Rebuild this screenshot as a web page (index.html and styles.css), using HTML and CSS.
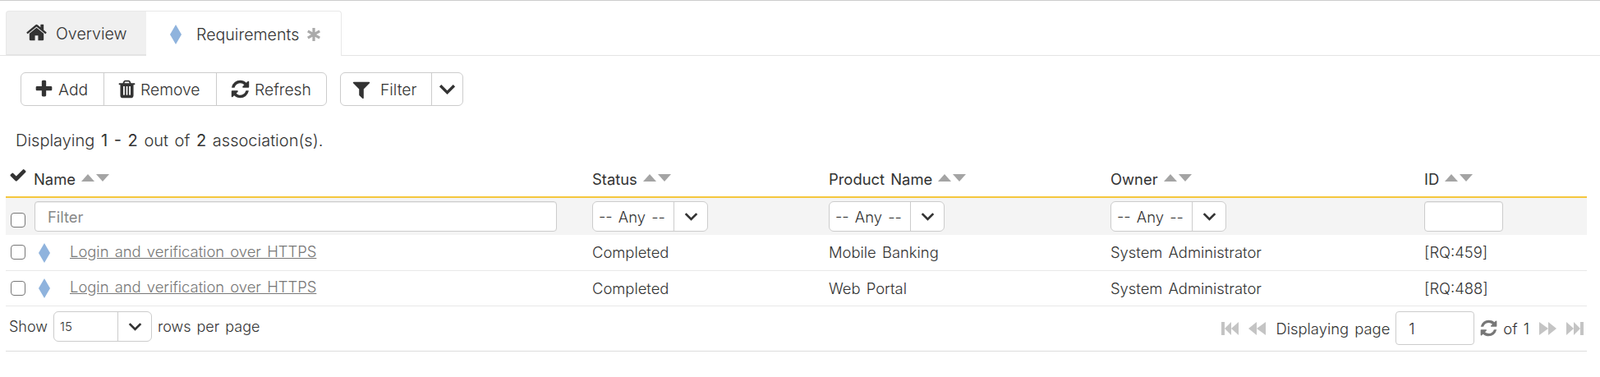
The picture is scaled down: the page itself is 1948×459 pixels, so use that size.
FILE: index.html
```html
<!DOCTYPE html>
<html lang="en">
<head>
    <meta charset="UTF-8">
    <meta name="viewport" content="width=device-width, initial-scale=1.0">
    <title>Requirements</title>
    <link rel="stylesheet" href="styles.css">
</head>
<body>
    <svg class="sprite" xmlns="http://www.w3.org/2000/svg">
        <symbol id="i-home" viewBox="0 0 1792 1792"><path d="M1472 992v480q0 26-19 45t-45 19h-384v-384h-256v384h-384q-26 0-45-19t-19-45v-480q0-1 .5-3t.5-3l575-474 575 474q1 2 1 6zm223-69l-62 74q-8 9-21 11h-3q-13 0-21-7l-692-577-692 577q-12 8-24 7-13-2-21-11l-62-74q-8-10-7-23.5t11-21.5l719-599q32-26 76-26t76 26l244 204v-195q0-14 9-23t23-9h192q14 0 23 9t9 23v408l219 182q10 8 11 21.5t-7 23.5z"/></symbol>
        <symbol id="i-plus" viewBox="0 0 1792 1792"><path d="M1600 736v192q0 40-28 68t-68 28h-416v416q0 40-28 68t-68 28h-192q-40 0-68-28t-28-68v-416h-416q-40 0-68-28t-28-68v-192q0-40 28-68t68-28h416v-416q0-40 28-68t68-28h192q40 0 68 28t28 68v416h416q40 0 68 28t28 68z"/></symbol>
        <symbol id="i-trash" viewBox="0 0 1792 1792"><path d="M704 1376v-704q0-14-9-23t-23-9h-64q-14 0-23 9t-9 23v704q0 14 9 23t23 9h64q14 0 23-9t9-23zm256 0v-704q0-14-9-23t-23-9h-64q-14 0-23 9t-9 23v704q0 14 9 23t23 9h64q14 0 23-9t9-23zm256 0v-704q0-14-9-23t-23-9h-64q-14 0-23 9t-9 23v704q0 14 9 23t23 9h64q14 0 23-9t9-23zm-544-992h448l-48-117q-7-9-17-11h-317q-10 2-17 11zm928 32v64q0 14-9 23t-23 9h-96v948q0 83-47 143.5t-113 60.5h-832q-66 0-113-58.5t-47-141.5v-952h-96q-14 0-23-9t-9-23v-64q0-14 9-23t23-9h309l70-167q15-37 54-63t79-26h320q40 0 79 26t54 63l70 167h309q14 0 23 9t9 23z"/></symbol>
        <symbol id="i-refresh" viewBox="0 0 1792 1792"><path d="M1639 1056q0 5-1 7-64 268-268 434.5t-478 166.5q-146 0-282.5-55t-243.5-157l-129 129q-19 19-45 19t-45-19-19-45v-448q0-26 19-45t45-19h448q26 0 45 19t19 45-19 45l-137 137q71 66 161 102t187 36q134 0 250-65t186-179q11-17 53-117 8-23 30-23h192q13 0 22.5 9.5t9.5 22.5zm25-800v448q0 26-19 45t-45 19h-448q-26 0-45-19t-19-45 19-45l138-138q-148-137-349-137-134 0-250 65t-186 179q-11 17-53 117-8 23-30 23h-199q-13 0-22.5-9.5t-9.5-22.5v-7q65-268 270-434.5t480-166.5q146 0 284 55.5t245 156.5l130-129q19-19 45-19t45 19 19 45z"/></symbol>
        <symbol id="i-filter" viewBox="0 0 1792 1792"><path d="M1595 295q17 41-14 70l-493 493v742q0 42-39 59-13 5-25 5-27 0-45-19l-256-256q-19-19-19-45v-486l-493-493q-31-29-14-70 17-39 59-39h1280q42 0 59 39z"/></symbol>
        <symbol id="i-chevron" viewBox="0 0 20 20"><path d="M2 6 10 14 18 6" fill="none" stroke="currentColor" stroke-width="3.2"/></symbol>
        <symbol id="i-check" viewBox="0 0 1792 1792"><path d="M1671 566q0 40-28 68l-724 724-136 136q-28 28-68 28t-68-28l-136-136-362-362q-28-28-28-68t28-68l136-136q28-28 68-28t68 28l294 295 656-657q28-28 68-28t68 28l136 136q28 28 28 68z"/></symbol>
        <symbol id="i-asterisk" viewBox="0 0 20 20"><path d="M10 1v18M2 5.5l16 9M18 5.5l-16 9" fill="none" stroke="currentColor" stroke-width="3.6"/></symbol>
        <symbol id="i-diamond" viewBox="0 0 14 24"><path d="M7 0 14 12 7 24 0 12z"/></symbol>
        <symbol id="i-first" viewBox="0 0 21 16"><path d="M0 0h4v16H0zM4 8 12 0v16zM12 8 21 0v16z"/></symbol>
        <symbol id="i-prev" viewBox="0 0 21 16"><path d="M0 8 10 0v16zM10 8 21 0v16z"/></symbol>
        <symbol id="i-next" viewBox="0 0 21 16"><path d="M0 0 11 8 0 16zM11 0 21 8 11 16z"/></symbol>
        <symbol id="i-last" viewBox="0 0 21 16"><path d="M0 0 9 8 0 16zM9 0 17 8 9 16zM17 0h4v16h-4z"/></symbol>
    </svg>

    <div class="tabs">
        <div class="tab tab-overview">
            <svg class="icon icon-home"><use href="#i-home"/></svg>
            <span>Overview</span>
        </div>
        <div class="tab tab-active">
            <svg class="icon diamond"><use href="#i-diamond"/></svg>
            <span>Requirements</span>
            <svg class="icon icon-star"><use href="#i-asterisk"/></svg>
        </div>
    </div>

    <div class="toolbar">
        <div class="btn-group group-main">
            <div class="btn btn-add"><svg class="icon"><use href="#i-plus"/></svg>Add</div>
            <div class="btn btn-remove"><svg class="icon"><use href="#i-trash"/></svg>Remove</div>
            <div class="btn btn-refresh"><svg class="icon"><use href="#i-refresh"/></svg>Refresh</div>
        </div>
        <div class="btn-group group-filter">
            <div class="btn btn-filter"><svg class="icon"><use href="#i-filter"/></svg>Filter</div>
            <div class="btn btn-caret"><svg class="icon chevron"><use href="#i-chevron"/></svg></div>
        </div>
    </div>

    <p class="summary">Displaying <b>1 - 2</b> out of <b>2</b> association(s).</p>

    <table class="grid">
        <colgroup>
            <col class="col-check">
            <col class="col-name">
            <col class="col-status">
            <col class="col-product">
            <col class="col-owner">
            <col class="col-id">
        </colgroup>
        <thead>
            <tr class="head-row">
                <th class="cell-check"><svg class="icon icon-check"><use href="#i-check"/></svg></th>
                <th>Name <span class="sort"><i class="up"></i><i class="down"></i></span></th>
                <th>Status <span class="sort"><i class="up"></i><i class="down"></i></span></th>
                <th>Product Name <span class="sort"><i class="up"></i><i class="down"></i></span></th>
                <th>Owner <span class="sort"><i class="up"></i><i class="down"></i></span></th>
                <th>ID <span class="sort"><i class="up"></i><i class="down"></i></span></th>
            </tr>
            <tr class="filter-row">
                <td class="cell-check"><input type="checkbox" class="box box-low"></td>
                <td><input type="text" class="field field-name" placeholder="Filter"></td>
                <td><div class="combo"><span class="combo-text">-- Any --</span><span class="combo-btn"><svg class="icon chevron"><use href="#i-chevron"/></svg></span></div></td>
                <td><div class="combo"><span class="combo-text">-- Any --</span><span class="combo-btn"><svg class="icon chevron"><use href="#i-chevron"/></svg></span></div></td>
                <td><div class="combo"><span class="combo-text">-- Any --</span><span class="combo-btn"><svg class="icon chevron"><use href="#i-chevron"/></svg></span></div></td>
                <td><input type="text" class="field field-id"></td>
            </tr>
        </thead>
        <tbody>
            <tr class="data-row">
                <td class="cell-check"><input type="checkbox" class="box"></td>
                <td><svg class="icon diamond"><use href="#i-diamond"/></svg><a href="#" class="req-link">Login and verification over HTTPS</a></td>
                <td>Completed</td>
                <td>Mobile Banking</td>
                <td>System Administrator</td>
                <td>[RQ:459]</td>
            </tr>
            <tr class="data-row">
                <td class="cell-check"><input type="checkbox" class="box"></td>
                <td><svg class="icon diamond"><use href="#i-diamond"/></svg><a href="#" class="req-link">Login and verification over HTTPS</a></td>
                <td>Completed</td>
                <td>Web Portal</td>
                <td>System Administrator</td>
                <td>[RQ:488]</td>
            </tr>
        </tbody>
    </table>

    <div class="pager">
        <div class="pager-left">
            <span>Show</span>
            <div class="combo combo-rows"><span class="combo-text">15</span><span class="combo-btn"><svg class="icon chevron"><use href="#i-chevron"/></svg></span></div>
            <span>rows per page</span>
        </div>
        <div class="pager-right">
            <svg class="icon nav"><use href="#i-first"/></svg>
            <svg class="icon nav"><use href="#i-prev"/></svg>
            <span class="page-label">Displaying page</span>
            <input type="text" class="field field-page" value="1">
            <svg class="icon icon-reload"><use href="#i-refresh"/></svg>
            <span class="page-of">of 1</span>
            <svg class="icon nav"><use href="#i-next"/></svg>
            <svg class="icon nav"><use href="#i-last"/></svg>
        </div>
    </div>
</body>
</html>
```

FILE: styles.css
```css
* {
    box-sizing: border-box;
}
body {
    margin: 0;
    border-top: 1px solid #ccc;
    font-family: Inter, "Noto Sans", sans-serif;
    font-size: 18.4px;
    font-weight: 300;
    word-spacing: 2px;
    color: #333;
    background-color: #fff;
}
.sprite {
    display: none;
}
.icon {
    display: inline-block;
    fill: currentColor;
    flex: none;
}

/* tabs */
.tabs {
    display: flex;
    height: 55px;
    margin-top: 12px;
    padding-left: 7px;
    border-bottom: 1px solid #e4e4e4;
    font-size: 19.6px;
}
.tab {
    display: flex;
    align-items: center;
    height: 55px;
    padding-top: 2px;
    border: 1px solid #e8e8e8;
    border-bottom: 0;
}
.tab-overview {
    width: 171px;
    padding-left: 23px;
    gap: 10px;
    background-color: #f0f0f0;
    border-radius: 4px 0 0 0;
    border-right: 0;
    border-bottom: 2px solid #e4e4e4;
}
.tab-active {
    width: 238px;
    padding-left: 29px;
    background-color: #fff;
    border-radius: 0 4px 0 0;
    border-left: 0;
}
.tab-active .diamond {
    margin-right: 18px;
}
.icon-home {
    width: 27px;
    height: 27px;
    margin-top: -4px;
}
.icon-star {
    width: 18px;
    height: 18px;
    margin-left: 9px;
    color: #aaa;
}
.diamond {
    width: 14px;
    height: 24px;
    color: #8fb3dd;
}

/* toolbar */
.toolbar {
    display: flex;
    gap: 16px;
    margin: 20px 0 0 25px;
    font-size: 19.3px;
}
.btn-group {
    display: flex;
    height: 41px;
    border: 1px solid #ccc;
    border-radius: 6px;
}
.btn {
    display: flex;
    align-items: center;
    height: 100%;
    border-left: 1px solid #ccc;
}
.btn:first-child {
    border-left: 0;
}
.btn .icon {
    width: 25px;
    height: 25px;
}
.btn-add {
    width: 100px;
    padding-left: 15px;
    gap: 5px;
}
.btn-remove {
    width: 137px;
    padding-left: 15px;
    gap: 4px;
}
.btn-refresh {
    width: 134px;
    padding-left: 16px;
    gap: 5px;
}
.btn-filter {
    width: 110px;
    padding-left: 12px;
    gap: 10px;
}
.btn-filter .icon {
    width: 26px;
    height: 26px;
}
.btn-caret {
    justify-content: center;
    width: 38px;
}
.btn-caret .icon {
    width: 21px;
    height: 21px;
}
.chevron {
    width: 17px;
    height: 17px;
    color: #333;
}

.summary {
    margin: 30px 0 0 19px;
    line-height: 24px;
    font-size: 20px;
}
.summary b {
    font-weight: 400;
}

/* grid */
.grid {
    table-layout: fixed;
    border-collapse: collapse;
    width: 1925px;
    margin: 12px 0 0 7px;
}
.col-check {
    width: 34px;
}
.col-name {
    width: 680px;
}
.col-status {
    width: 288px;
}
.col-product {
    width: 343px;
}
.col-owner {
    width: 382px;
}
.col-id {
    width: 198px;
}
.grid th, .grid td {
    padding: 0;
    text-align: left;
    vertical-align: middle;
}
.head-row {
    height: 45px;
}
.head-row th {
    font-weight: 400;
    padding-top: 1px;
    border-bottom: 2px solid #f5c73d;
}
.cell-check {
    padding-left: 6px !important;
}
.icon-check {
    width: 22px;
    height: 22px;
    margin-top: -10px;
    display: block;
    margin-left: -2px;
}
.sort {
    display: inline-flex;
    gap: 2px;
    vertical-align: 4px;
}
.sort i {
    display: block;
    width: 0;
    height: 0;
    border-left: 8px solid transparent;
    border-right: 8px solid transparent;
}
.sort .up {
    border-bottom: 9px solid #a4a4a4;
}
.sort .down {
    border-top: 9px solid #a4a4a4;
}
.filter-row {
    height: 46px;
    background-color: #f4f4f4;
}
.box {
    appearance: none;
    display: block;
    width: 18px;
    height: 18px;
    margin: 0;
    background-color: #fff;
    border: 1.5px solid #777;
    border-radius: 4px;
}
.box-low {
    margin-top: 9px;
}
.field {
    display: block;
    height: 37px;
    font: inherit;
    word-spacing: inherit;
    color: inherit;
    background-color: #fff;
    border: 1px solid #ccc;
    border-radius: 4px;
    padding: 0 15px;
    outline: none;
}
.field::placeholder {
    color: #888;
    font-weight: 400;
}
.field-name {
    width: 636px;
    margin-left: 1px;
    box-shadow: inset 0 1px 1px #eee;
}
.field-id {
    width: 96px;
    box-shadow: inset 0 1px 1px #eee;
}
.combo {
    display: flex;
    align-items: center;
    width: 141px;
    height: 37px;
    background-color: #fff;
    border: 1px solid #ccc;
    border-radius: 6px;
}
.combo-text {
    width: 98px;
    padding-left: 7px;
    white-space: nowrap;
}
.combo-btn {
    display: flex;
    align-items: center;
    justify-content: center;
    flex: 1;
    height: 100%;
    border-left: 1px solid #ccc;
}
.data-row {
    height: 43px;
    border-bottom: 1px solid #e8e8e8;
}
.data-row .diamond {
    vertical-align: middle;
    margin: 0 24px 0 6px;
}
.req-link {
    color: #777;
    text-decoration: underline;
}

/* pager */
.pager {
    display: flex;
    justify-content: space-between;
    align-items: center;
    width: 1925px;
    height: 55px;
    margin-left: 7px;
    border-bottom: 1px solid #ddd;
}
.pager-left, .pager-right {
    display: flex;
    align-items: center;
}
.pager-left {
    gap: 7px;
    padding-left: 4px;
    padding-bottom: 4px;
    font-size: 18px;
}
.combo-rows {
    width: 120px;
}
.combo-rows .combo-text {
    width: 77px;
    padding-left: 7px;
    font-size: 15px;
}
.pager-right {
    padding-right: 4px;
}
.nav {
    width: 21px;
    height: 16px;
    margin-right: 12px;
    color: #c4c4c4;
}
.nav:last-child {
    margin-right: 0;
}
.page-label {
    margin-right: 7px;
}
.field-page {
    width: 96px;
    height: 41px;
    padding: 0 15px;
}
.icon-reload {
    width: 23px;
    height: 23px;
    margin: 0 6px;
    color: #777;
}
.page-of {
    margin-right: 12px;
}
```
